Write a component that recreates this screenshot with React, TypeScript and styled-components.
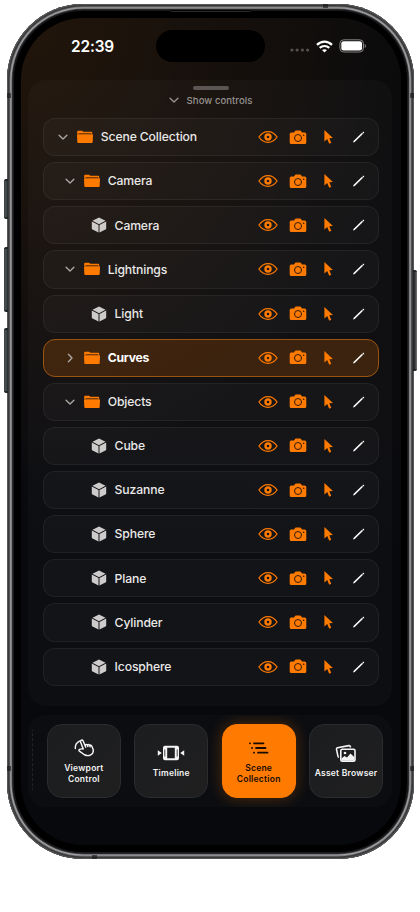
import React from "react";
import styled, { createGlobalStyle, css } from "styled-components";

const ORANGE = "#ff7a00";

const GlobalStyle = createGlobalStyle`
  *, *::before, *::after { box-sizing: border-box; }
  body { margin: 0; background: #fff; font-family: Inter, "Liberation Sans", sans-serif; -webkit-font-smoothing: antialiased; }
  svg { display: block; flex: none; }
`;

const Page = styled.main`
  width: 420px;
  height: 912px;
  overflow: hidden;
  padding: 4px 0 0 7px;
`;

const Phone = styled.div`
  position: relative;
  width: 407px;
  height: 855px;
  padding: 14px 13px 14px 14px;
  border-radius: 76px;
  background: #000;
  box-shadow: inset 0 0 0 1px #555657, inset 0 0 0 2.6px #39393a, inset 0 0 0 3.4px #77787a,
    inset 0 0 0 4.6px #a0a1a3, inset 0 0 0 5.3px #505153, inset 0 0 0 7px #19191b;
`;

const SideKey = styled.i<{ $side: "left" | "right"; $top: number; $height: number }>`
  position: absolute;
  ${(p) => p.$side}: -3px;
  top: ${(p) => p.$top}px;
  width: 4px;
  height: ${(p) => p.$height}px;
  border-radius: ${(p) => (p.$side === "left" ? "2px 0 0 2px" : "0 2px 2px 0")};
  background: ${(p) =>
    p.$side === "left"
      ? "linear-gradient(90deg, #3a4143, #4c5355 50%, #222627)"
      : "linear-gradient(270deg, #77797a, #343638 50%, #222)"};
  border-top: 2px solid #202425;
  border-bottom: 2px solid #202425;
`;

const Antenna = styled.i<{ $x: number; $y: number; $tall?: boolean }>`
  position: absolute;
  left: ${(p) => p.$x}px;
  top: ${(p) => p.$y}px;
  width: ${(p) => (p.$tall ? 5 : 4)}px;
  height: ${(p) => (p.$tall ? 4 : 5)}px;
  background: rgba(20, 20, 20, 0.6);
`;

const Speaker = styled.i`
  position: absolute;
  left: 163px;
  top: 6px;
  width: 81px;
  height: 2px;
  border-radius: 0 0 3px 3px;
  background: #050505;
  border-bottom: 1px solid #29292a;
`;

const Screen = styled.div`
  height: 827px;
  border-radius: 62px;
  overflow: hidden;
  display: flex;
  flex-direction: column;
  padding: 0 9px 0 7px;
  background: radial-gradient(ellipse 390px 460px at 0 0, rgba(255, 122, 0, 0.095), rgba(255, 122, 0, 0) 100%),
    linear-gradient(#0b0b0c 0, #0b0b0e 50%, #07090d 65%, #07090d);
`;

const StatusBar = styled.header`
  height: 62px;
  flex: none;
  position: relative;
  display: flex;
  align-items: center;
  justify-content: space-between;
  padding: 0 25px 6px 43px;
  color: #fff;
`;

const Clock = styled.time`
  font-size: 15.4px;
  font-weight: 600;
  letter-spacing: -0.15px;
`;

const Island = styled.div`
  position: absolute;
  left: 128px;
  top: 12px;
  width: 109px;
  height: 32px;
  border-radius: 16px;
  background: #000;
`;

const StatusIcons = styled.div`
  display: flex;
  align-items: center;
  gap: 6px;
`;

const ScenePanel = styled.section`
  height: 626px;
  flex: none;
  border-radius: 18px;
  background: rgba(255, 255, 255, 0.022);
  padding: 6px 13px 0 15px;
  display: flex;
  flex-direction: column;
`;

const Grabber = styled.div`
  width: 36px;
  height: 4px;
  border-radius: 2px;
  background: #5b5654;
  align-self: center;
`;

const ShowControls = styled.button`
  border: 0;
  background: none;
  padding: 1px 2px 0 0;
  margin: 0 0 9px;
  height: 19px;
  display: flex;
  align-items: center;
  justify-content: center;
  gap: 7px;
  font: 500 9.6px Inter, sans-serif;
  letter-spacing: 0.03px;
  color: #96918e;
`;

const Rows = styled.ul`
  list-style: none;
  margin: 0;
  padding: 0;
  display: flex;
  flex-direction: column;
  gap: 6px;
`;

const Row = styled.li<{ $depth: number; $active?: boolean }>`
  height: 38.13px;
  display: flex;
  align-items: center;
  border-radius: 12px;
  border: 1px solid ${(p) => (p.$active ? "#9b540f" : "rgba(255, 255, 255, 0.06)")};
  background: ${(p) => (p.$active ? "rgba(255, 122, 0, 0.18)" : "rgba(255, 255, 255, 0.027)")};
  padding: 0 10px 0 ${(p) => 12.6 + p.$depth * 6.9}px;
  color: ${(p) => (p.$active ? "#fff" : "#eae9e8")};
  font-size: 12.2px;
  font-weight: ${(p) => (p.$active ? 700 : 500)};
  letter-spacing: ${(p) => (p.$active ? -0.25 : -0.13)}px;
`;

const Toggle = styled.span`
  width: 12px;
  height: 12px;
  margin-right: 7.2px;
  color: #aaa6a2;
`;

const NodeIcon = styled.span`
  width: 18px;
  margin-right: 7px;
  display: flex;
  justify-content: center;
`;

const Label = styled.span`
  flex: 1;
  white-space: nowrap;
  padding-bottom: 0.6px;
`;

const Actions = styled.div`
  display: flex;
  gap: 12px;
  color: ${ORANGE};
`;

const Action = styled.button<{ $plain?: boolean }>`
  border: 0;
  padding: 0;
  background: none;
  width: 18.3px;
  height: 18px;
  display: flex;
  align-items: center;
  justify-content: center;
  color: ${(p) => (p.$plain ? "#fff" : "inherit")};
`;

const TabBar = styled.nav`
  height: 92px;
  flex: none;
  margin-top: 9px;
  border-radius: 18px;
  background: rgba(255, 255, 255, 0.018);
  padding: 9px 9px 9px 3px;
  display: flex;
  gap: 13.6px;
  overflow: hidden;
`;

const HiddenTabEdge = styled.span`
  width: 2.4px;
  flex: none;
  height: 62px;
  margin-top: 5px;
  border-right: 1px dashed #222426;
  border-radius: 0 5px 5px 0;
`;

const Tab = styled.button<{ $active?: boolean }>`
  flex: 0 0 73.8px;
  height: 74px;
  padding: 0;
  border-radius: 15px;
  border: 1px solid #2b2c2e;
  background: linear-gradient(135deg, #1c1d1f, #1f1f20);
  color: #f4f4f4;
  display: flex;
  flex-direction: column;
  align-items: center;
  justify-content: center;
  gap: 5px;
  font: 600 8.5px/10.4px Inter, sans-serif;
  letter-spacing: 0.24px;
  white-space: pre-line;
  text-align: center;
  ${(p) =>
    p.$active &&
    css`
      background: ${ORANGE};
      border-color: ${ORANGE};
      color: #160b02;
      box-shadow: 0 0 16px rgba(255, 122, 0, 0.3);
    `}
`;

const TabIcon = styled.span`
  height: 20px;
  flex: none;
  display: flex;
  align-items: center;
`;

const TabLabel = styled.span`
  margin: 0 -4px;
`;

const Chevron = ({ open }: { open: boolean }) => (
  <svg width="12" height="12" viewBox="0 0 12 12" fill="none" stroke="currentColor" strokeWidth="1.4" strokeLinecap="round" strokeLinejoin="round">
    <path d={open ? "M2.1 4.2 6 7.9l3.9-3.7" : "M4.4 2.3 8 6 4.4 9.7"} />
  </svg>
);

const Folder = () => (
  <svg width="18" height="14" viewBox="0 0 18 14">
    <path d="M1.2 3V1.6Q1.2.7 2 .7h4.1l1.2 1.1h8Q16.2 1.8 16.2 2.7V4H1.2Z" fill={ORANGE} />
    <path d="M2.6 3.6h12.7" stroke="#5d310b" strokeWidth=".9" />
    <path d="M1.6 4.2h14.8q.6 0 .6.7l-.3 7.2q-.1 1-1 1H2.3q-.9 0-1-1L1 4.9q0-.7.6-.7Z" fill={ORANGE} />
  </svg>
);

const Cube = () => (
  <svg width="16" height="16" viewBox="0 0 16 16" fill="#cecccb">
    <path d="M8 .4 14.5 3.7 8 7.2 1.5 3.7Z" />
    <path d="m.8 4.6 6.7 3.5v7.5L1.6 12.6Q.8 12.2.8 11.4Z" />
    <path d="M15.2 4.6 8.5 8.1v7.5l5.9-3q.8-.4.8-1.2Z" />
  </svg>
);

const Eye = () => (
  <svg width="20" height="14" viewBox="0 0 20 14" fill="none" stroke="currentColor">
    <path d="M.9 7Q4.6 1.6 10 1.6T19.1 7q-3.7 5.4-9.1 5.4T.9 7Z" strokeWidth="1.2" />
    <circle cx="10" cy="7" r="2.5" strokeWidth="2.4" />
  </svg>
);

const CameraIcon = () => (
  <svg width="18" height="15" viewBox="0 0 18 15">
    <path d="M2.2 2.5H5L6 1Q6.3.5 6.9.5h4.2q.6 0 .9.5l1 1.5h2.7q1.6 0 1.6 1.5v8.500q0 1.500-1.500 1.500H2.200Q.7 14 .7 12.500V4q0-1.500 1.500-1.500Z" fill="currentColor" />
    <circle cx="9" cy="8" r="3.5" fill="none" stroke="#321b0c" strokeWidth="1" />
    <circle cx="14.7" cy="5.2" r=".8" fill="#321b0c" />
  </svg>
);

const Cursor = () => (
  <svg width="12" height="16" viewBox="0.8 0 12 16" fill="currentColor">
    <path d="M2.2 1v11.600L5 10.100l1.800 4.200q.2.500.7.300l1.100-.5q.5-.2.300-.7L7.100 9.300l3.600-.3Z" />
  </svg>
);

const Pencil = () => (
  <svg width="14" height="14" viewBox="0.3 0 14 14" fill="currentColor">
    <path d="m1.400 12.600.4-1.700 8.500-8.200 1.100 1.100-8.400 8.300Z" />
    <path d="m10.700 2.300.5-.5q.4-.3.700 0l.5.500q.2.300 0 .6l-.5.500Z" />
  </svg>
);

const Signal = () => (
  <svg width="20" height="14" viewBox="0 0 20 14" fill="#55504c">
    {[1.9, 7.1, 12.4, 17.6].map((x) => (
      <circle key={x} cx={x} cy="11" r="1.6" />
    ))}
  </svg>
);

const Wifi = () => (
  <svg width="17" height="13" viewBox="0 0 17 13" fill="none" stroke="#fff" strokeWidth="2.2">
    <path d="M1 4.900Q4.200 1.700 8.500 1.700T16 4.900" />
    <path d="M3.700 7.900Q5.800 6 8.500 6t4.800 1.900" />
    <path d="M8.500 12.600 6 10.100q2.500-1.900 5 0Z" fill="#fff" stroke="none" />
  </svg>
);

const Battery = () => (
  <svg width="28" height="14" viewBox="0 0 28 14">
    <rect x=".9" y=".8" width="23.6" height="12.2" rx="3.8" fill="none" stroke="#858381" strokeWidth="1" />
    <rect x="2.3" y="2.2" width="20.8" height="9.4" rx="2.4" fill="#fff" />
    <path d="M25.700 4.900q1.400.7 1.400 2t-1.400 2Z" fill="#777573" />
  </svg>
);

const Touch = () => (
  <svg width="20" height="18" viewBox="0.4 0.6 18.6 16.8" fill="none" stroke="currentColor" strokeWidth="1.35" strokeLinecap="round" strokeLinejoin="round">
    <path d="M1.600 9.500Q1.200 4.700 5.500 2.500" />
    <path d="M9 9.900 6.500 3.500q-.4-1.400.7-1.800 1.200-.4 1.700.8l1.800 4.100q.7-1.200 2-.5 1.200-.8 2.100.3 1.500-.5 2.200 1l1 2.300q1.300 4-2 5.700-2.800 1.500-5.900-.1L5.400 11.900q-1-1 .1-1.700 1-.6 3.500-.3M10.700 6.600l.6 1.600m1.400-2.100.6 1.600m1.500-1.300.6 1.500" />
  </svg>
);

const Timeline = () => (
  <svg width="28" height="16" viewBox="0 0 28 16" fill="currentColor">
    <path d="m.8 5.300 4 2.700-4 2.700ZM27.200 5.300l-4 2.700 4 2.700Z" />
    <path fillRule="evenodd" d="M8 .8h12q2 0 2 2v10.400q0 2-2 2H8q-2 0-2-2V2.800q0-2 2-2Zm2.200 1.900v10.600h7.600V2.700Z" />
    <path d="M7.800 4.500v7M20.200 4.500v7" stroke="#1d1e20" strokeWidth=".8" />
  </svg>
);

const Outline = () => (
  <svg width="22" height="14" viewBox="0 0 22 14" fill="none" stroke="currentColor" strokeWidth="1.8" strokeLinecap="round">
    <path d="M2 2.300h.1M6 2.300h9.500M4 7h.1M8 7h9.500M6 11.700h.1M10 11.700h9.500" />
  </svg>
);

const Gallery = () => (
  <svg width="22" height="19" viewBox="0 0 22 19" fill="none" stroke="currentColor" strokeWidth="1.6" strokeLinejoin="round">
    <path d="M4 13.200q-.8 0-1-.8L1.500 5.300q-.2-1.200 1-1.500l11.300-2.200q1.200-.2 1.500.9l.2 1" />
    <rect x="5.8" y="5.3" width="14.2" height="12" rx="1.5" />
    <circle cx="10" cy="9" r="1.3" fill="currentColor" stroke="none" />
    <path d="m6.500 14.600 3-2.500 2.500 1.500 3.500-4 4 3.600v3.600h-13Z" fill="currentColor" stroke="none" />
  </svg>
);

type Kind = "open" | "closed" | "object";
const NODES: { name: string; kind: Kind; depth: number }[] = [
  { name: "Scene Collection", kind: "open", depth: 0 },
  { name: "Camera", kind: "open", depth: 1 },
  { name: "Camera", kind: "object", depth: 2 },
  { name: "Lightnings", kind: "open", depth: 1 },
  { name: "Light", kind: "object", depth: 2 },
  { name: "Curves", kind: "closed", depth: 1 },
  { name: "Objects", kind: "open", depth: 1 },
  ...["Cube", "Suzanne", "Sphere", "Plane", "Cylinder", "Icosphere"].map((name) => ({
    name,
    kind: "object" as Kind,
    depth: 2,
  })),
];

const TABS = [
  { label: "Viewport\nControl", icon: <Touch /> },
  { label: "Timeline", icon: <Timeline /> },
  { label: "Scene\nCollection", icon: <Outline />, active: true },
  { label: "Asset Browser", icon: <Gallery /> },
];

export default function App() {
  return (
    <Page>
      <GlobalStyle />
      <Phone>
        <SideKey $side="left" $top={175} $height={40} />
        <SideKey $side="left" $top={243} $height={65} />
        <SideKey $side="left" $top={324} $height={65} />
        <SideKey $side="right" $top={266} $height={101} />
        <Antenna $x={0} $y={89} />
        <Antenna $x={403} $y={89} />
        <Antenna $x={0} $y={762} />
        <Antenna $x={403} $y={762} />
        <Antenna $x={316} $y={0} $tall />
        <Antenna $x={85} $y={851} $tall />
        <Speaker />
        <Screen>
          <StatusBar>
            <Clock>22:39</Clock>
            <Island />
            <StatusIcons>
              <Signal />
              <Wifi />
              <Battery />
            </StatusIcons>
          </StatusBar>
          <ScenePanel>
            <Grabber />
            <ShowControls>
              <Chevron open />
              Show controls
            </ShowControls>
            <Rows>
              {NODES.map((n, i) => (
                <Row key={i} $depth={n.depth} $active={n.kind === "closed"}>
                  <Toggle>{n.kind !== "object" && <Chevron open={n.kind === "open"} />}</Toggle>
                  <NodeIcon>{n.kind === "object" ? <Cube /> : <Folder />}</NodeIcon>
                  <Label>{n.name}</Label>
                  <Actions>
                    <Action aria-label="Visibility"><Eye /></Action>
                    <Action aria-label="Render"><CameraIcon /></Action>
                    <Action aria-label="Selectable"><Cursor /></Action>
                    <Action aria-label="Rename" $plain><Pencil /></Action>
                  </Actions>
                </Row>
              ))}
            </Rows>
          </ScenePanel>
          <TabBar>
            <HiddenTabEdge />
            {TABS.map((t) => (
              <Tab key={t.label} $active={t.active}>
                <TabIcon>{t.icon}</TabIcon>
                <TabLabel>{t.label}</TabLabel>
              </Tab>
            ))}
          </TabBar>
        </Screen>
      </Phone>
    </Page>
  );
}
